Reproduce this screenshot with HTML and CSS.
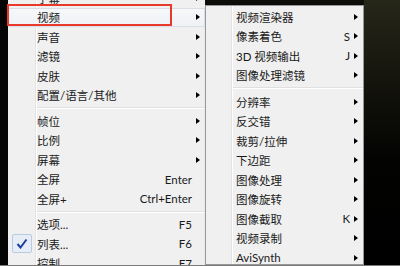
FILE: index.html
```html
<!DOCTYPE html>
<html lang="zh-CN">
  <head>
    <meta charset="UTF-8" />
    <title>视频菜单</title>
    <link rel="stylesheet" href="styles.css">
  </head>
  <body>
    <div class="screen">
      <div class="strip"></div>

      <ul class="menu main">
        <li class="item"><span class="gutter"></span><span class="label">字幕</span><span class="arrow"></span></li>
        <li class="item active">
          <span class="gutter"></span><span class="label">视频</span><span class="arrow"></span>
          <span class="mark"></span>
        </li>
        <li class="item"><span class="gutter"></span><span class="label">声音</span><span class="arrow"></span></li>
        <li class="item"><span class="gutter"></span><span class="label">滤镜</span><span class="arrow"></span></li>
        <li class="item"><span class="gutter"></span><span class="label">皮肤</span><span class="arrow"></span></li>
        <li class="item"><span class="gutter"></span><span class="label">配置/语言/其他</span><span class="arrow"></span></li>
        <li class="sep"></li>
        <li class="item"><span class="gutter"></span><span class="label">帧位</span><span class="arrow"></span></li>
        <li class="item"><span class="gutter"></span><span class="label">比例</span><span class="arrow"></span></li>
        <li class="item"><span class="gutter"></span><span class="label">屏幕</span><span class="arrow"></span></li>
        <li class="item"><span class="gutter"></span><span class="label">全屏</span><span class="key">Enter</span><span class="noarrow"></span></li>
        <li class="item"><span class="gutter"></span><span class="label">全屏+</span><span class="key">Ctrl+Enter</span><span class="noarrow"></span></li>
        <li class="sep"></li>
        <li class="item"><span class="gutter"></span><span class="label">选项...</span><span class="key">F5</span><span class="noarrow"></span></li>
        <li class="item">
          <span class="gutter">
            <span class="check">
              <svg width="12" height="11" viewBox="0 0 12 11"><path d="M1.5 6 L4.5 9.5 L10.5 1.5" fill="none" stroke="#1f3f9e" stroke-width="2"/></svg>
            </span>
          </span>
          <span class="label">列表...</span><span class="key">F6</span><span class="noarrow"></span>
        </li>
        <li class="item"><span class="gutter"></span><span class="label">控制</span><span class="key">F7</span><span class="noarrow"></span></li>
      </ul>

      <ul class="menu sub">
        <li class="item"><span class="gutter"></span><span class="label">视频渲染器</span><span class="arrow"></span></li>
        <li class="item"><span class="gutter"></span><span class="label">像素着色</span><span class="key">S</span><span class="arrow"></span></li>
        <li class="item"><span class="gutter"></span><span class="label">3D 视频输出</span><span class="key">J</span><span class="arrow"></span></li>
        <li class="item"><span class="gutter"></span><span class="label">图像处理滤镜</span><span class="arrow"></span></li>
        <li class="sep"></li>
        <li class="item"><span class="gutter"></span><span class="label">分辨率</span><span class="arrow"></span></li>
        <li class="item"><span class="gutter"></span><span class="label">反交错</span><span class="arrow"></span></li>
        <li class="item"><span class="gutter"></span><span class="label">裁剪/拉伸</span><span class="arrow"></span></li>
        <li class="item"><span class="gutter"></span><span class="label">下边距</span><span class="arrow"></span></li>
        <li class="item"><span class="gutter"></span><span class="label">图像处理</span><span class="arrow"></span></li>
        <li class="item"><span class="gutter"></span><span class="label">图像旋转</span><span class="arrow"></span></li>
        <li class="item"><span class="gutter"></span><span class="label">图像截取</span><span class="key">K</span><span class="arrow"></span></li>
        <li class="item"><span class="gutter"></span><span class="label">视频录制</span><span class="arrow"></span></li>
        <li class="item"><span class="gutter"></span><span class="label">AviSynth</span><span class="arrow"></span></li>
      </ul>

      <div class="video"></div>
    </div>
  </body>
</html>
```

FILE: styles.css
```css
* { box-sizing: border-box; }
body {
  margin: 0;
  background: #000;
  font-family: Lato, "Noto Sans CJK SC", sans-serif;
  font-size: 11.5px;
  color: #1a1a1a;
}
.screen {
  display: flex;
  height: 266px;
  overflow: hidden;
  background: #0d0d09;
  border-bottom: 1px solid #7a7a7a;
}
.strip {
  width: 8px;
  flex: none;
  background: #050505;
}
.menu {
  list-style: none;
  margin: 0;
  padding: 0;
  background-color: #f0f0f0;
  flex: none;
}
.main {
  width: 197px;
  margin-top: -12px;
  background-image: linear-gradient(to right, transparent 27px, #e2e3e3 27px, #e2e3e3 28px, #fff 28px, #fff 29px, transparent 29px);
}
.sub {
  width: 159px;
  margin-top: 5px;
  padding-top: 1px;
  border: 1px solid #979797;
  box-shadow: 2px 2px 3px rgba(0,0,0,0.4);
  background-image: linear-gradient(to right, transparent 25px, #e2e3e3 25px, #e2e3e3 26px, #fff 26px, #fff 27px, transparent 27px);
}
.item {
  position: relative;
  display: flex;
  align-items: center;
  height: 19.5px;
  white-space: nowrap;
}
.gutter {
  width: 29px;
  flex: none;
  display: flex;
  align-items: center;
  padding-left: 4px;
}
.sub .gutter { width: 30px; }
.label { flex: 1; }
.key { margin-right: 1px; }
.arrow, .noarrow {
  width: 12px;
  flex: none;
  display: flex;
  padding-left: 3px;
}
.arrow::before {
  content: "";
  border-left: 4px solid #000;
  border-top: 3.5px solid transparent;
  border-bottom: 3.5px solid transparent;
}
.sep {
  height: 6px;
  margin-left: 29px;
  background: linear-gradient(#f0f0f0 2px, #e0e0e0 2px, #e0e0e0 3px, #fff 3px, #fff 4px, transparent 4px);
}
.sub .sep { height: 7px; margin-left: 27px; }
.active {
  background: linear-gradient(#f7f8fa, #eef1f5);
  box-shadow: inset 0 0 0 1px #d9dee6;
}
.mark {
  position: absolute;
  left: -1px;
  top: -3.5px;
  width: 165px;
  height: 22px;
  border: 2px solid #e8392b;
}
.check {
  width: 20px;
  height: 19px;
  display: flex;
  align-items: center;
  justify-content: center;
  background: #e6edf6;
  border: 1px solid #b9cbe3;
  border-radius: 2px;
}
.video {
  flex: 1;
  background: linear-gradient(#262619, #15150d 30%, #030302 60%, #000);
}
```
